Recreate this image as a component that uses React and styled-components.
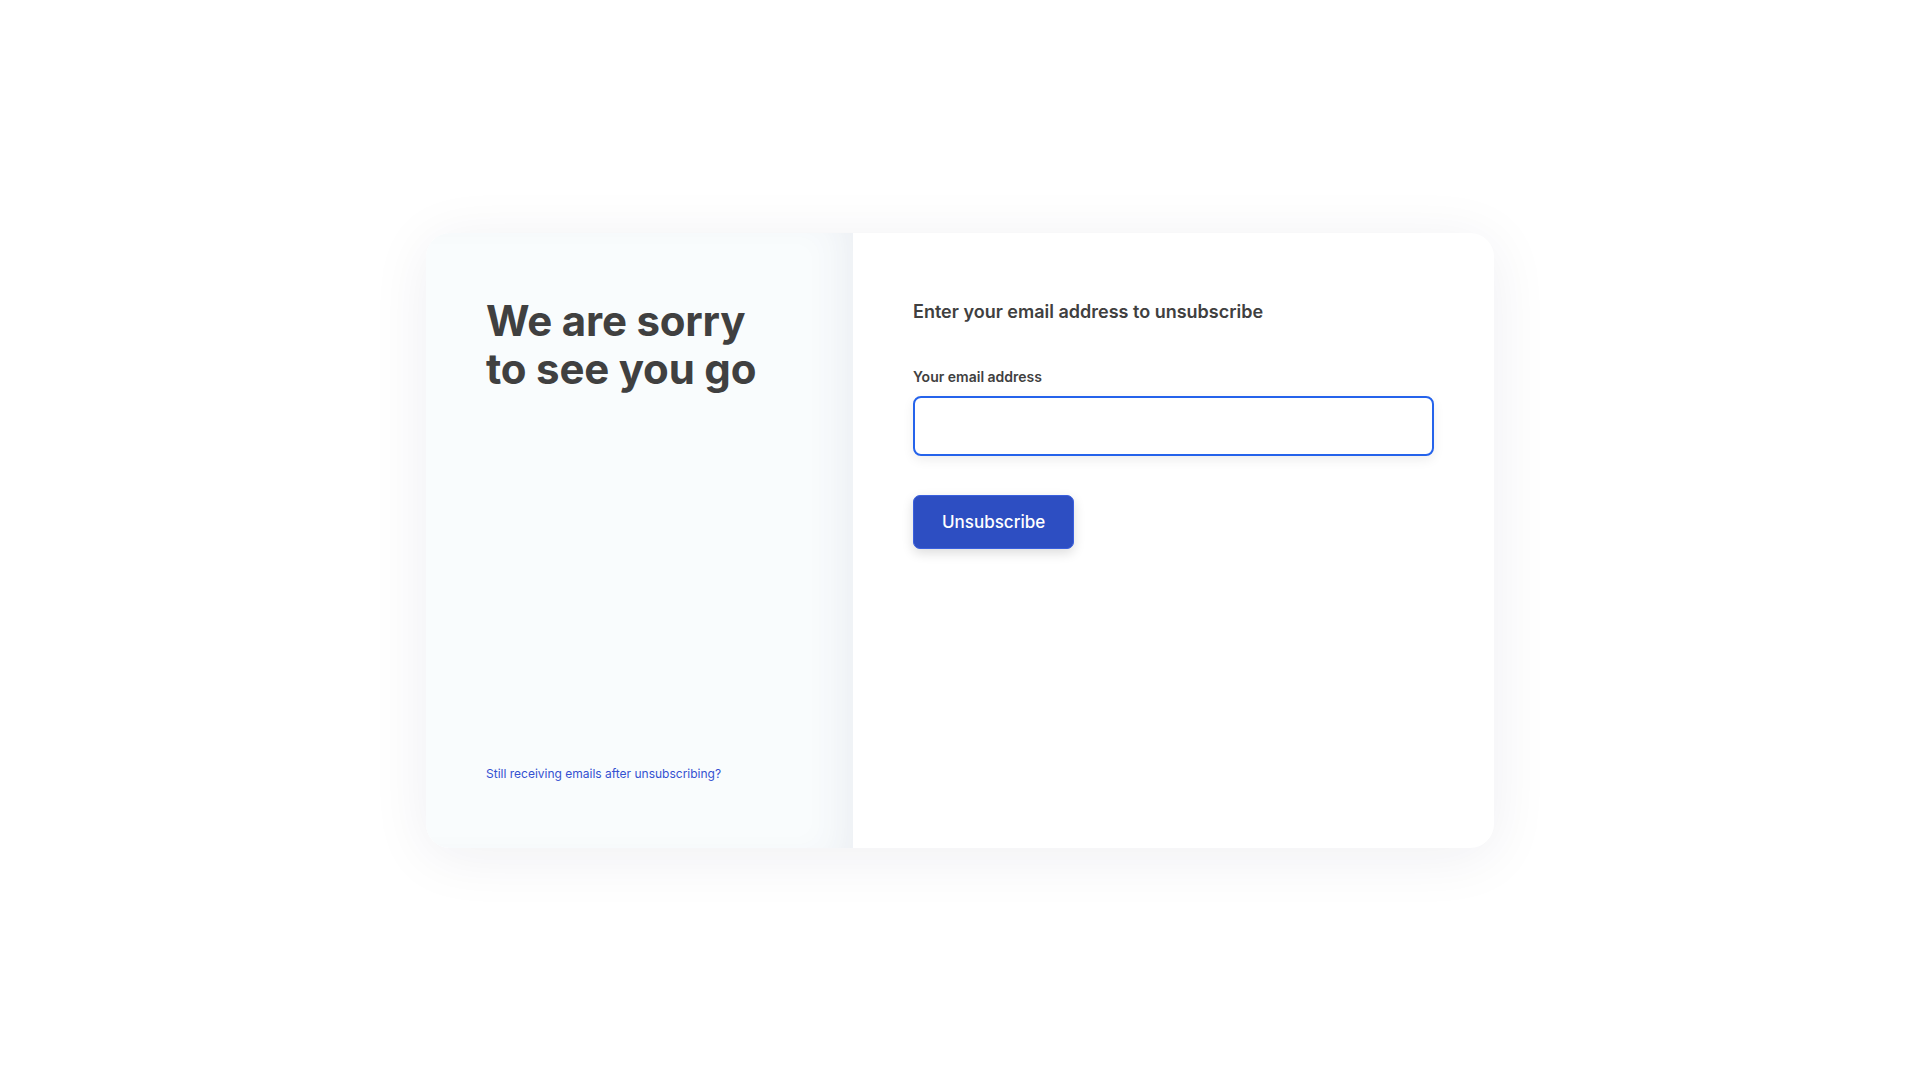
import React from 'react'
import styled, { createGlobalStyle } from 'styled-components'

const GlobalStyle = createGlobalStyle`
  html, body {
    margin: 0;
    padding: 0;
    background: #ffffff;
    font-family: Inter, 'Noto Sans', sans-serif;
  }
  * { box-sizing: border-box; }
`

function App() {
  const [email, setEmail] = React.useState('')

  return (
    <>
      <GlobalStyle />
      <Page>
        <Card>
          <Aside>
            <Title>We are sorry<br />to see you go</Title>
            <HelpLink href="#">Still receiving emails after unsubscribing?</HelpLink>
          </Aside>
          <Main>
            <Heading>Enter your email address to unsubscribe</Heading>
            <Form onSubmit={(e) => e.preventDefault()}>
              <Field>
                <Label htmlFor="email">Your email address</Label>
                <Input
                  id="email"
                  type="email"
                  value={email}
                  onChange={(e) => setEmail(e.target.value)}
                />
              </Field>
              <Button type="submit">Unsubscribe</Button>
            </Form>
          </Main>
        </Card>
      </Page>
    </>
  )
}

const Page = styled.div`
  width: 100vw;
  height: 100vh;
  display: flex;
  align-items: center;
  justify-content: center;
  background: #ffffff;
`

const Card = styled.div`
  width: 1068px;
  height: 615px;
  display: flex;
  border-radius: 24px;
  overflow: hidden;
  background: #ffffff;
  box-shadow: 0 8px 60px rgba(30, 30, 70, 0.07);
`

const Aside = styled.div`
  width: 427px;
  flex-shrink: 0;
  display: flex;
  flex-direction: column;
  justify-content: space-between;
  padding: 64px 60px 65px 60px;
  background: #f9fcfd;
  box-shadow: inset -30px 0 40px -22px rgba(60, 60, 110, 0.08);
`

const Title = styled.h1`
  margin: 0;
  font-size: 42px;
  line-height: 48px;
  font-weight: 700;
  letter-spacing: -0.2px;
  color: #404040;
`

const HelpLink = styled.a`
  font-size: 12px;
  line-height: 18px;
  color: #3451d1;
  text-decoration: none;
`

const Main = styled.div`
  flex: 1;
  padding: 65px 60px 64px;
  display: flex;
  flex-direction: column;
`

const Heading = styled.h2`
  margin: 0;
  font-size: 18px;
  line-height: 27px;
  font-weight: 600;
  color: #404040;
`

const Form = styled.form`
  margin-top: 42px;
  display: flex;
  flex-direction: column;
  align-items: flex-start;
  gap: 39px;
`

const Field = styled.div`
  align-self: stretch;
  display: flex;
  flex-direction: column;
  gap: 9px;
`

const Label = styled.label`
  font-size: 14px;
  line-height: 20px;
  font-weight: 600;
  color: #404040;
`

const Input = styled.input`
  width: 100%;
  height: 60px;
  padding: 0 16px;
  border: 2px solid #2563eb;
  border-radius: 8px;
  outline: none;
  font-family: inherit;
  font-size: 16px;
  color: #333;
  background: #ffffff;
  box-shadow: 0 4px 12px rgba(0, 0, 0, 0.07);
`

const Button = styled.button`
  height: 54px;
  padding: 0 28px;
  border: 1px solid #3a60de;
  border-radius: 7px;
  background: #2d4ec2;
  color: #ffffff;
  font-family: inherit;
  font-size: 17px;
  font-weight: 500;
  cursor: pointer;
  box-shadow: 0 4px 12px rgba(0, 0, 0, 0.14);
`

export default App
